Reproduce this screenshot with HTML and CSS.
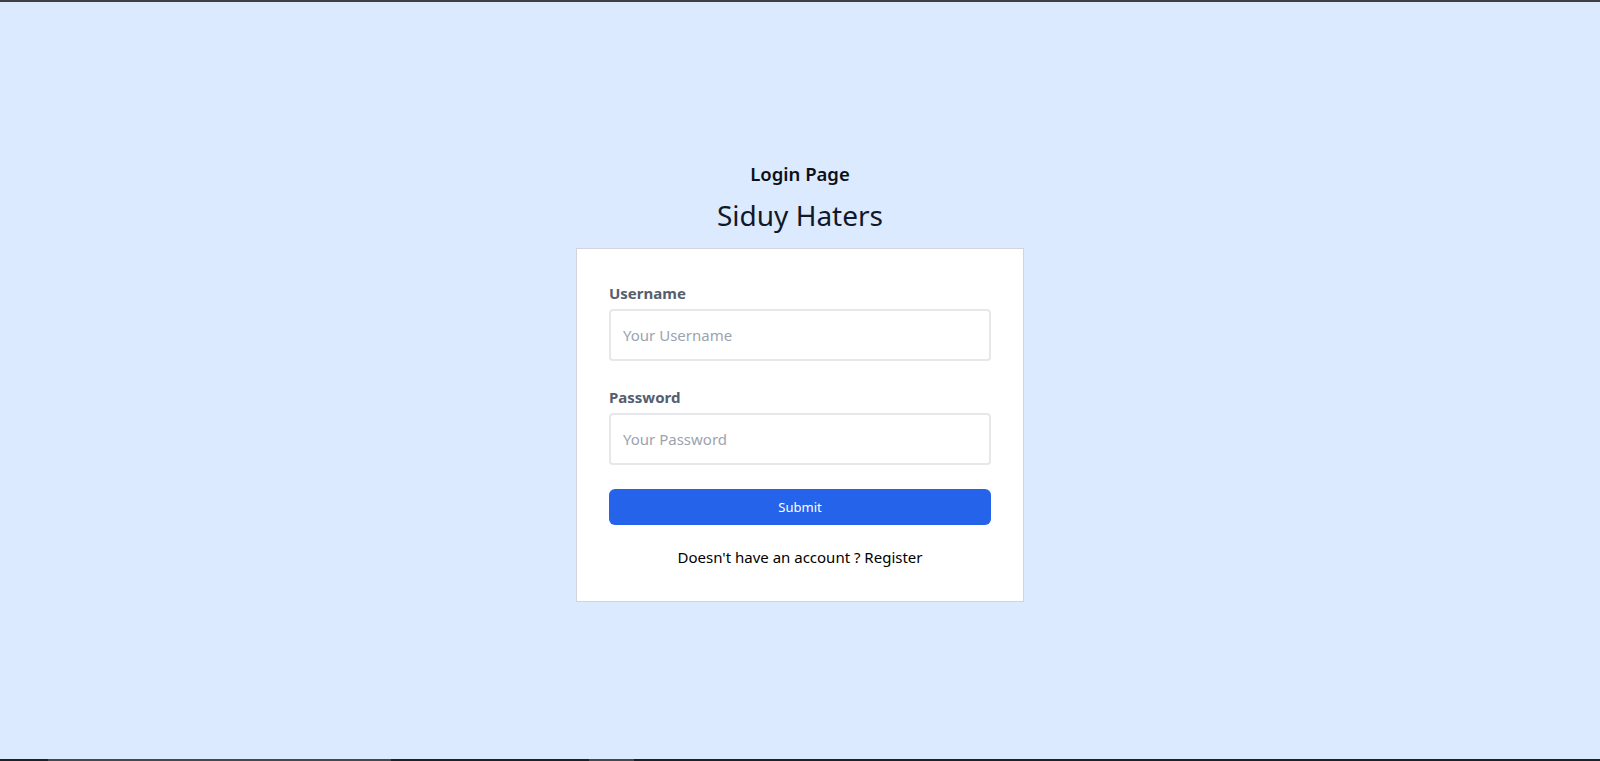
FILE: index.html
```html
<!DOCTYPE html>
<html lang="en">
<head>
<meta charset="utf-8">
<title>Login Page</title>
<link rel="stylesheet" href="styles.css">
</head>
<body>
<div class="page">
  <div class="topbar"></div>
  <main class="main">
    <h2 class="subtitle">Login Page</h2>
    <h1 class="title">Siduy Haters</h1>
    <form class="card">
      <div class="field">
        <label class="label" for="username">Username</label>
        <input class="input" id="username" type="text" placeholder="Your Username">
      </div>
      <div class="field">
        <label class="label" for="password">Password</label>
        <input class="input" id="password" type="password" placeholder="Your Password">
      </div>
      <button class="submit" type="button">Submit</button>
      <p class="footer">Doesn't have an account ? Register</p>
    </form>
  </main>
  <div class="bottombar">
    <span class="seg seg-a"></span>
    <span class="seg seg-b"></span>
  </div>
</div>
</body>
</html>
```
FILE: styles.css
```css
* { box-sizing: border-box; }
html, body { margin: 0; padding: 0; }
body {
  font-family: "Noto Sans", "Open Sans", sans-serif;
  background: #dbeafe;
  color: #000;
}
.page {
  height: 761px;
  display: flex;
  flex-direction: column;
}
.topbar {
  height: 2px;
  background: #3c3f44;
  flex: none;
}
.bottombar {
  height: 2px;
  background: #1f2023;
  flex: none;
  display: flex;
}
.seg { height: 2px; background: #46484c; display: block; }
.seg-a { margin-left: 48px; width: 343px; }
.seg-b { margin-left: 198px; width: 45px; }
.main {
  flex: 1;
  display: flex;
  flex-direction: column;
  align-items: center;
  justify-content: center;
}
.subtitle {
  margin: 0;
  font-size: 18.5px;
  line-height: 28px;
  font-weight: 600;
  color: #0b0f19;
}
.title {
  margin: 9px 0 0;
  font-size: 28px;
  line-height: 36px;
  font-weight: 400;
  color: #111827;
}
.card {
  margin-top: 15px;
  width: 448px;
  background: #fff;
  border: 1px solid #d1d5db;
  padding: 32px;
  display: flex;
  flex-direction: column;
}
.field {
  display: flex;
  flex-direction: column;
  margin-bottom: 24px;
}
.label {
  font-size: 15px;
  line-height: 24px;
  font-weight: 700;
  color: #545e6e;
  margin-bottom: 4px;
}
.input {
  height: 52px;
  border: 2px solid #e5e7eb;
  border-radius: 4px;
  padding: 12px;
  font-family: inherit;
  font-size: 15px;
  color: #111827;
  outline: none;
}
.input::placeholder { color: #9ca3af; }
.submit {
  height: 36px;
  border: none;
  border-radius: 6px;
  background: #2563eb;
  color: #fff;
  font-family: inherit;
  font-size: 13px;
}
.footer {
  margin: 20px 0 0;
  text-align: center;
  font-size: 15px;
  line-height: 24px;
}
```
